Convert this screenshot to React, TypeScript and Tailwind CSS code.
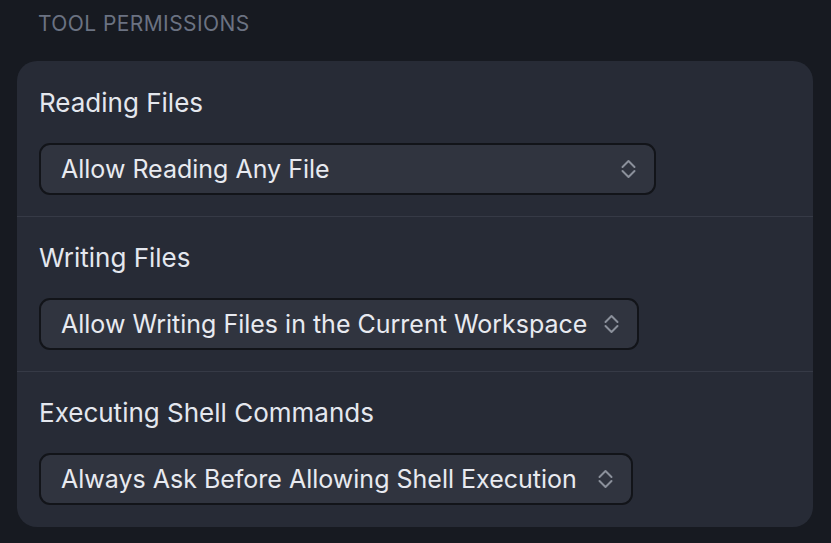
import React from "react";

type Permission = {
  label: string;
  value: string;
  width: string;
};

const PERMISSIONS: Permission[] = [
  { label: "Reading Files", value: "Allow Reading Any File", width: "w-[617px]" },
  { label: "Writing Files", value: "Allow Writing Files in the Current Workspace", width: "w-[600px]" },
  { label: "Executing Shell Commands", value: "Always Ask Before Allowing Shell Execution", width: "w-[594px]" },
];

function UpDownChevrons() {
  return (
    <svg width="15" height="20" viewBox="0 0 15 20" fill="none" className="shrink-0">
      <path d="M1.5 8 L7.5 2 L13.5 8" stroke="#8b909b" strokeWidth="2" strokeLinecap="round" strokeLinejoin="round" />
      <path d="M1.5 12 L7.5 18 L13.5 12" stroke="#8b909b" strokeWidth="2" strokeLinecap="round" strokeLinejoin="round" />
    </svg>
  );
}

function PermissionRow({ item, first, last }: { item: Permission; first: boolean; last: boolean }) {
  return (
    <div
      className={`px-[22px] ${first ? "pt-[26px]" : "pt-[25px]"} ${last ? "pb-[22px]" : "pb-[21px] border-b border-[#363a46]"}`}
    >
      <div className="text-[26px] leading-[32px] text-[#e4e7ee]">{item.label}</div>
      <button
        className={`mt-[24px] h-[52px] ${item.width} flex items-center justify-between pl-[20px] pr-[18px] rounded-[11px] border-2 border-[#121419] bg-[#30343f] text-left`}
      >
        <span className="text-[25px] leading-none text-[#e8eaf0] whitespace-nowrap">{item.value}</span>
        <UpDownChevrons />
      </button>
    </div>
  );
}

export default function App() {
  return (
    <div
      className="w-[831px] h-[543px] bg-[#171a21] pl-[17px] pr-[18px] pt-[10px] overflow-hidden"
      style={{ fontFamily: "Inter, 'Noto Sans', sans-serif" }}
    >
      <div className="px-[21px] text-[21px] leading-[28px] tracking-[0.02em] uppercase text-[#6b7282]">
        Tool Permissions
      </div>
      <div className="mt-[23px] rounded-[20px] bg-[#272b36]">
        {PERMISSIONS.map((item, i) => (
          <PermissionRow
            key={item.label}
            item={item}
            first={i === 0}
            last={i === PERMISSIONS.length - 1}
          />
        ))}
      </div>
    </div>
  );
}
